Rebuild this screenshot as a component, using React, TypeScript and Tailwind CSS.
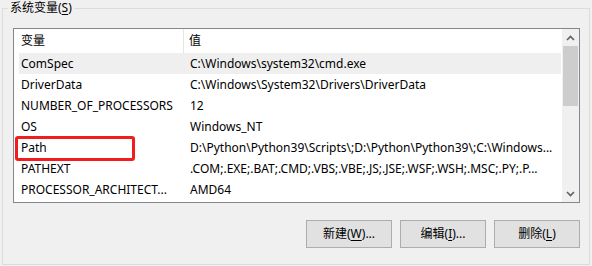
const FONT = 'font-["Noto_Sans","Noto_Sans_CJK_SC",sans-serif]';

const rows: [string, string][] = [
  ['ComSpec', 'C:\\Windows\\system32\\cmd.exe'],
  ['DriverData', 'C:\\Windows\\System32\\Drivers\\DriverData'],
  ['NUMBER_OF_PROCESSORS', '12'],
  ['OS', 'Windows_NT'],
  ['Path', 'D:\\Python\\Python39\\Scripts\\;D:\\Python\\Python39\\;C:\\Windows...'],
  ['PATHEXT', '.COM;.EXE;.BAT;.CMD;.VBS;.VBE;.JS;.JSE;.WSF;.WSH;.MSC;.PY;.P...'],
  ['PROCESSOR_ARCHITECT...', 'AMD64'],
];

function Chevron({ up }: { up?: boolean }) {
  return (
    <svg width="9" height="6" viewBox="0 0 9 6">
      <polyline
        points={up ? '1,5 4.5,1.5 8,5' : '1,1 4.5,4.5 8,1'}
        fill="none"
        stroke="#606060"
        strokeWidth="1.6"
      />
    </svg>
  );
}

function Button({ label, hotkey, suffix }: { label: string; hotkey: string; suffix?: string }) {
  return (
    <button
      type="button"
      className="w-[86px] h-[28px] bg-[#e1e1e1] border border-[#adadad] text-[12px] text-black flex items-center justify-center"
    >
      {label}(<span className="underline underline-offset-2">{hotkey}</span>){suffix}
    </button>
  );
}

export default function App() {
  return (
    <div className={`w-[592px] h-[266px] bg-[#f0f0f0] pt-[8px] pl-[2px] text-black ${FONT}`}>
      <div className="relative w-[588px] h-[257px] border border-[#dcdcdc] pt-[19px] pl-[10px]">
        <span className="absolute left-[5px] top-[-9px] px-[2px] bg-[#f0f0f0] text-[12px] leading-[16px]">
          系统变量(<span className="underline underline-offset-2">S</span>)
        </span>

        <div className="relative w-[567px] h-[175px] border border-[#828790] bg-white flex">
          <div className="flex-1 flex flex-col text-[12px]">
            <div className="h-[24px] flex items-center shrink-0">
              <div className="w-[169px] pl-[7px]">变量</div>
              <div className="w-px h-full bg-[#e5e5e5]" />
              <div className="pl-[5px]">值</div>
            </div>
            {rows.map(([name, value], i) => (
              <div
                key={name}
                className={`h-[21px] ml-[5px] mr-[1px] flex items-center shrink-0 ${i === 0 ? 'bg-[#efefef]' : ''}`}
              >
                <div className="w-[164px] pl-[2px] whitespace-nowrap overflow-hidden">{name}</div>
                <div className="flex-1 pl-[7px] whitespace-nowrap overflow-hidden">{value}</div>
              </div>
            ))}
          </div>

          <div className="w-[17px] bg-[#f0f0f0] flex flex-col items-center">
            <div className="h-[17px] flex items-center justify-center">
              <Chevron up />
            </div>
            <div className="w-[15px] h-[60px] bg-[#cdcdcd]" />
            <div className="flex-1" />
            <div className="h-[17px] flex items-center justify-center">
              <Chevron />
            </div>
          </div>

          <div className="absolute left-[1px] top-[107px] w-[120px] h-[25px] border-[3px] border-[#f31c1c] rounded-[3px]" />
        </div>

        <div className="w-[567px] mt-[17px] flex justify-end gap-[8px]">
          <Button label="新建" hotkey="W" suffix="..." />
          <Button label="编辑" hotkey="I" suffix="..." />
          <Button label="删除" hotkey="L" />
        </div>
      </div>
    </div>
  );
}
